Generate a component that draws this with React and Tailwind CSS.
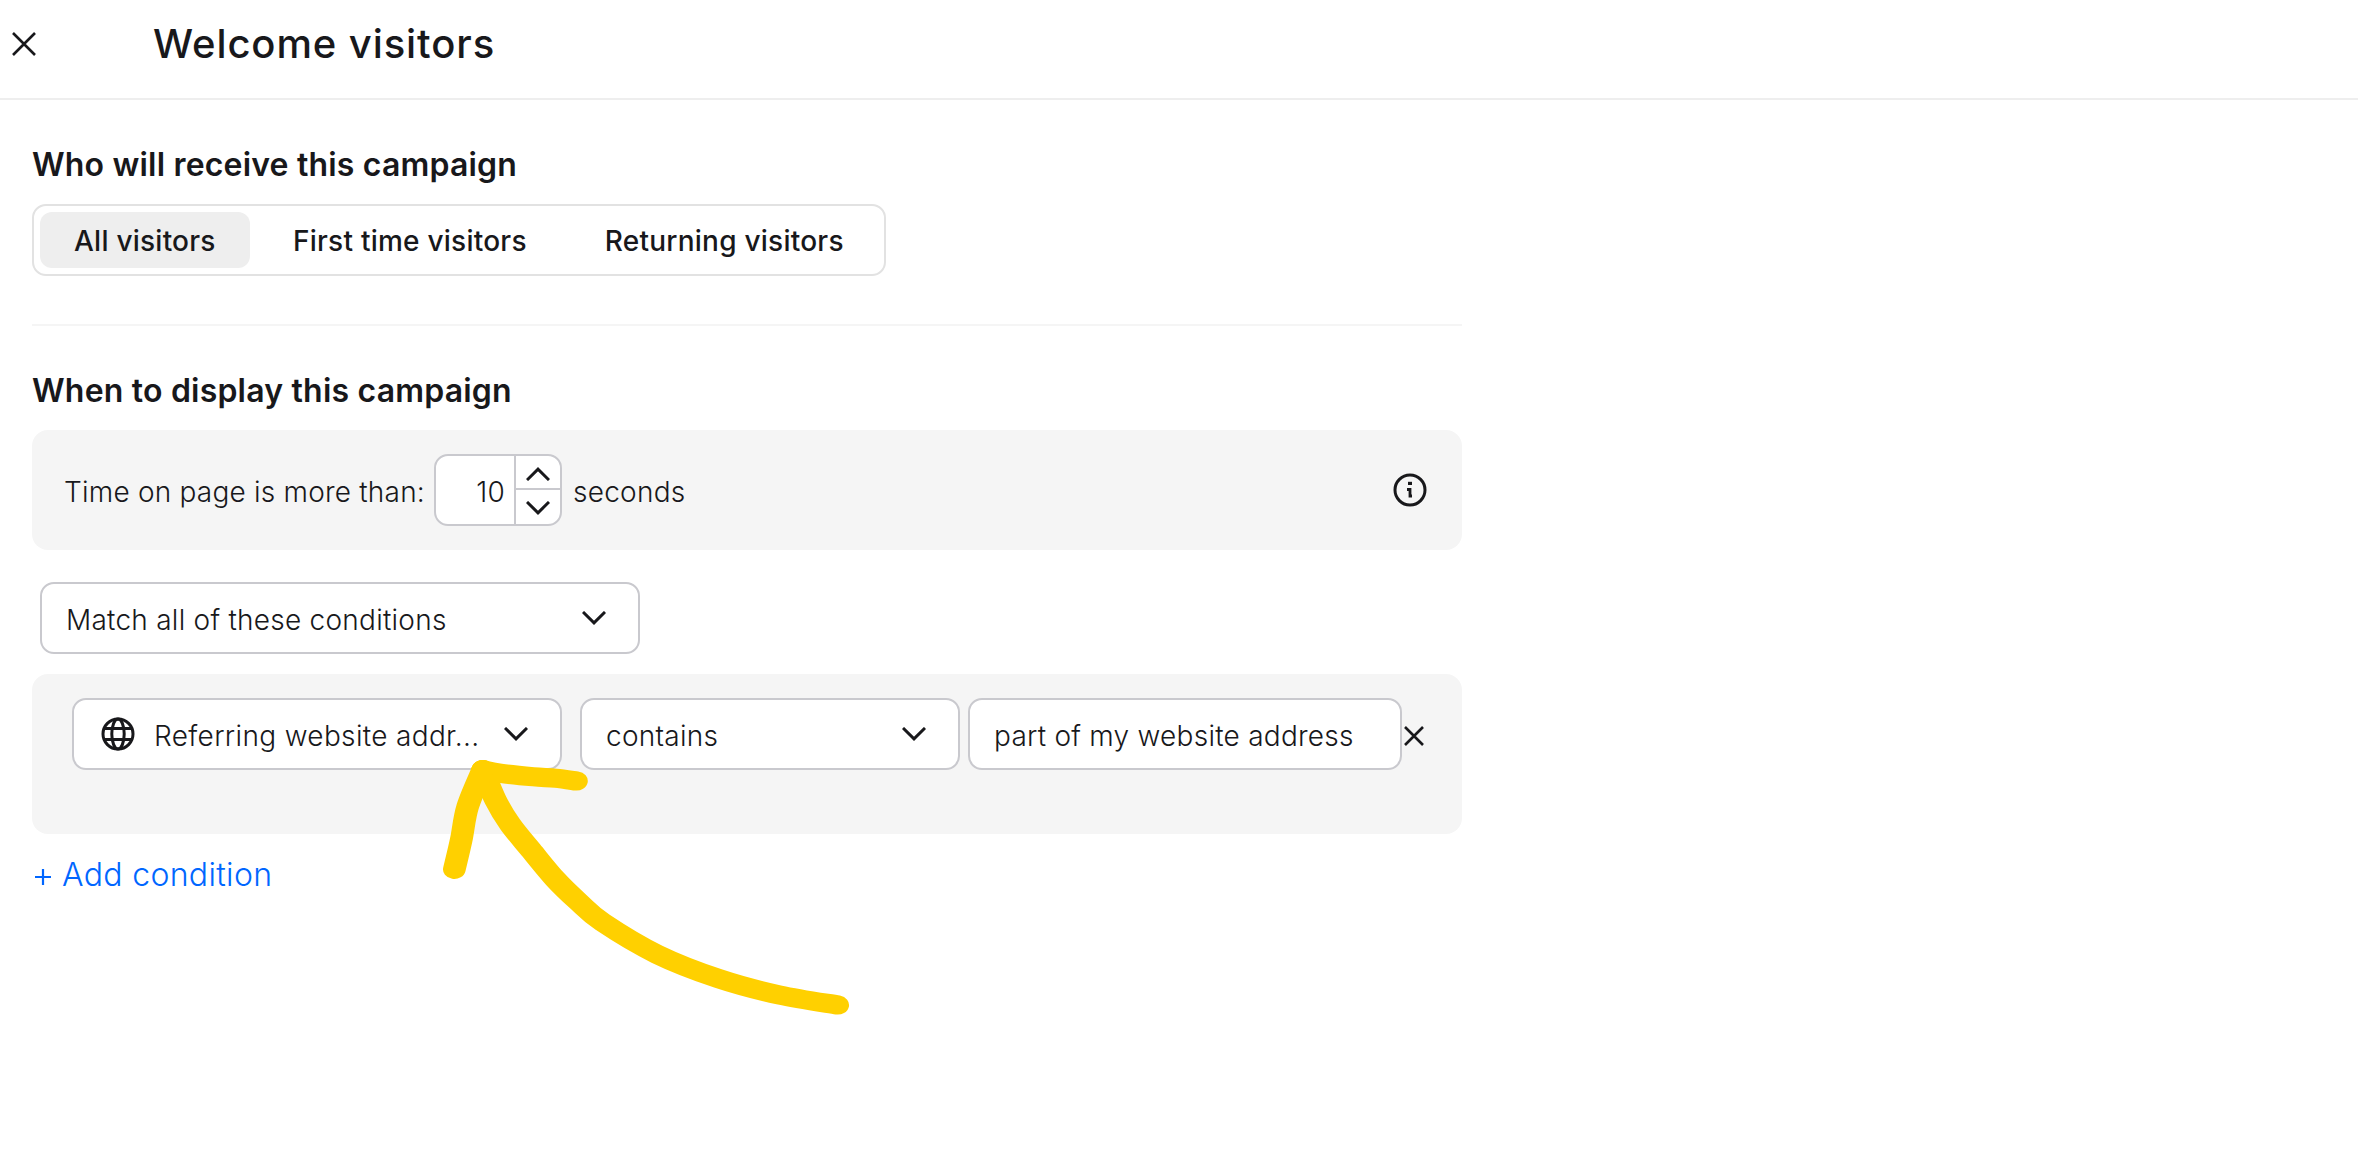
import React from "react";

function Stroke({ d, w, h, sw = 2.6, className = "" }) {
  return (
    <svg width={w} height={h} viewBox={`0 0 ${w} ${h}`} fill="none" stroke="#18181b" strokeWidth={sw} className={`shrink-0 ${className}`}>
      <path d={d} />
    </svg>
  );
}

const Chevron = ({ up = false, className = "" }) => (
  <Stroke w={24} h={14} sw={3} d={up ? "M1 13 12 2.2 23 13" : "M1 1 12 11.8 23 1"} className={className} />
);

function Field({ children, className = "" }) {
  return (
    <div className={`flex h-[72px] shrink-0 items-center rounded-[14px] border-2 border-[#c9c9ce] bg-white ${className}`}>
      {children}
    </div>
  );
}

function Globe() {
  return (
    <svg width="34" height="34" viewBox="0 0 34 34" fill="none" stroke="#18181b" strokeWidth="3" className="shrink-0">
      <circle cx="17" cy="17" r="15" />
      <ellipse cx="17" cy="17" rx="6.2" ry="15" />
      <path d="M3.2 11.5h27.6M3.2 22.5h27.6" />
    </svg>
  );
}

function InfoIcon() {
  return (
    <svg width="34" height="34" viewBox="0 0 34 34" fill="none" stroke="#18181b" strokeWidth="3" className="shrink-0">
      <circle cx="17" cy="17" r="15" />
      <path d="M14 16.5h3v6.5h2" strokeWidth="2.8" />
      <path d="M15 10.4h4" strokeWidth="3.2" />
    </svg>
  );
}

/* Catmull-Rom spline through the given points, as a cubic path. */
function smooth(points) {
  const at = (i) => points[Math.max(0, Math.min(points.length - 1, i))];
  let d = `M${points[0].join(" ")}`;
  for (let i = 0; i < points.length - 1; i++) {
    const [a, b, c, e] = [at(i - 1), at(i), at(i + 1), at(i + 2)];
    d += `C${b[0] + (c[0] - a[0]) / 6} ${b[1] + (c[1] - a[1]) / 6} ${c[0] - (e[0] - b[0]) / 6} ${c[1] - (e[1] - b[1]) / 6} ${c[0]} ${c[1]}`;
  }
  return d;
}

const shaft = smooth([
  [354, 265], [304.5, 255], [252.8, 238.5], [201, 214.3], [154.8, 182.3],
  [134, 161.5], [114.5, 139], [94, 110], [76.5, 84.5], [64, 60], [53.2, 29.7],
]);
const rightBarb = smooth([[53.2, 29.7], [68, 33.3], [96, 36.8], [115, 38.2], [132.6, 41]]);
const leftBarb = smooth([[53.2, 29.7], [40.4, 66.7], [34.9, 100], [29.1, 129.3]]);

/* Hand-drawn pointer; the pen tip is slightly wider than it is tall. */
function Arrow() {
  return (
    <svg width="460" height="300" viewBox="0 0 460 300" className="pointer-events-none absolute left-[420px] top-[740px]">
      <g transform="scale(1.18 1)" fill="none" stroke="#ffd000" strokeWidth="19.2" strokeLinecap="round" strokeLinejoin="round">
        <path d={shaft} />
        <path d={rightBarb} />
        <path d={leftBarb} />
      </g>
    </svg>
  );
}

export default function App() {
  return (
    <div className="relative h-[1150px] w-[2358px] overflow-hidden bg-white font-['Inter',sans-serif] text-[28px] leading-10 font-[350] tracking-[0.25px] whitespace-nowrap text-[#18181b]">
      <header className="flex h-[100px] items-center border-b-2 border-[#eeeeee] pb-[10px] pl-3">
        <Stroke w={24} h={24} d="M1 1 23 23M23 1 1 23" />
        <h1 className="ml-[117px] text-[40px] font-medium tracking-[0.9px]">Welcome visitors</h1>
      </header>

      <main className="ml-8 w-[1430px] pt-[45px]">
        <h2 className="text-[32px] font-semibold tracking-[0.18px]">Who will receive this campaign</h2>
        <div className="mt-[19px] flex h-[72px] w-[854px] items-center rounded-[14px] border-2 border-[#e2e2e2] pl-1.5 font-medium tracking-[0.24px]">
          <div className="flex h-14 w-[210px] items-center rounded-xl bg-[#eeeeee] pt-px pl-[34px]">All visitors</div>
          <div className="ml-[43px] pt-px">First time visitors</div>
          <div className="ml-[78px] pt-px">Returning visitors</div>
        </div>
        <hr className="mt-12 border-t-2 border-[#f5f5f5]" />

        <h2 className="mt-[45px] text-[32px] font-semibold tracking-[0.2px]">When to display this campaign</h2>
        <section className="mt-[19px] flex h-[120px] items-center rounded-2xl bg-[#f5f5f5] pr-[35px] pl-8">
          <span className="w-[370px] pt-1 tracking-[0.21px]">Time on page is more than:</span>
          <Field className="w-[128px]">
            <span className="w-[78px] pt-1 pr-[9px] text-right">10</span>
            <div className="flex h-full w-[46px] flex-col border-l-2 border-[#c9c9ce]">
              <div className="flex h-[34px] items-center justify-center border-b-2 border-[#c9c9ce] pt-[3px]">
                <Chevron up />
              </div>
              <div className="flex flex-1 items-center justify-center pt-px">
                <Chevron />
              </div>
            </div>
          </Field>
          <span className="ml-[11px] pt-1">seconds</span>
          <span className="ml-auto">
            <InfoIcon />
          </span>
        </section>

        <Field className="mt-8 ml-2 w-[600px] justify-between pr-8 pl-6">
          <span className="pt-1">Match all of these conditions</span>
          <Chevron />
        </Field>

        <section className="mt-5 flex h-[160px] items-start rounded-2xl bg-[#f5f5f5] pt-6 pl-10">
          <Field className="w-[490px] pl-[27px]">
            <Globe />
            <span className="ml-[19px] pt-1 tracking-[0.34px]">Referring website addr...</span>
            <Chevron className="mr-8 ml-auto" />
          </Field>
          <Field className="ml-[18px] w-[380px] justify-between pr-8 pl-6">
            <span className="pt-1">contains</span>
            <Chevron />
          </Field>
          <Field className="ml-2 w-[434px] pl-6">
            <span className="pt-1">part of my website address</span>
          </Field>
          <Stroke w={20} h={20} d="M1 1 19 19M19 1 1 19" className="mt-7 ml-[2px]" />
        </section>

        <div className="mt-[21px] flex items-center text-[32px] text-[#0066ff]">
          <svg width="16" height="16" viewBox="0 0 16 16" stroke="currentColor" strokeWidth="2.2" className="mt-[3px] ml-[3px]">
            <path d="M0 8h16M8 0v16" />
          </svg>
          <span className="ml-[11px] tracking-[0.32px]">Add condition</span>
        </div>
      </main>
      <Arrow />
    </div>
  );
}
